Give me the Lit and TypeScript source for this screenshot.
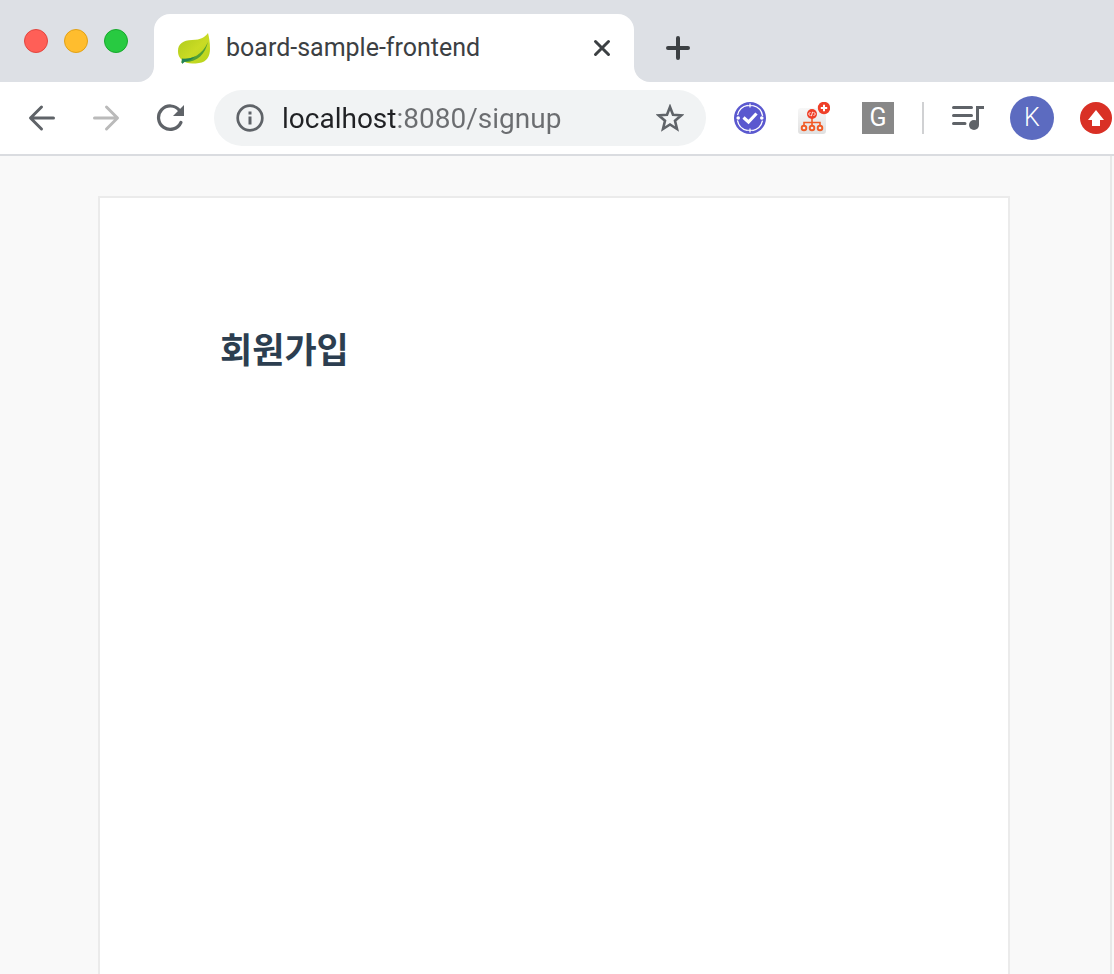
import { LitElement, html, css, svg } from "lit";
import { customElement } from "lit/decorators.js";

const backIcon = html`<svg width="28" height="28" viewBox="0 0 28 28" aria-hidden="true" fill="none" stroke="#5f6368" stroke-width="3" stroke-linecap="round" stroke-linejoin="round"><path d="M25.500 14H3M13.500 3L2.500 14l11 11"/></svg>`;
const forwardIcon = html`<svg width="28" height="28" viewBox="0 0 28 28" aria-hidden="true" fill="none" stroke="#bababa" stroke-width="3" stroke-linecap="round" stroke-linejoin="round"><path d="M2.500 14H25M14.500 3l11 11-11 11"/></svg>`;
const reloadIcon = html`<svg width="28" height="28" viewBox="0 0 28 28" aria-hidden="true"><path d="M23.500 6.500A11.700 11.700 0 1 0 24.900 18.500" fill="none" stroke="#5f6368" stroke-width="3.200" stroke-linecap="round"/><path d="M28 1v11H17z" fill="#5f6368"/></svg>`;
const infoIcon = html`<svg width="28" height="28" viewBox="0 0 28 28" aria-hidden="true"><circle cx="14" cy="14" r="12.300" fill="none" stroke="#5f6368" stroke-width="2.700"/><path d="M12.500 7.500h3v3h-3zM12.500 12.500h3v8h-3z" fill="#5f6368"/></svg>`;
const starIcon = html`<svg width="28" height="28" viewBox="0 0 28 28" aria-hidden="true"><path d="M14 3l3 7.800 8.300.5-6.300 5.400 2 8.300-7-4.500-7 4.500 2-8.300-6.300-5.400 8.300-.5z" fill="none" stroke="#5f6368" stroke-width="2.600"/></svg>`;

const leaf = html`<svg width="32" height="32" viewBox="0 0 32 32" aria-hidden="true">
  <defs><linearGradient id="leaf" x1="0" y1="0" x2="1" y2="1"><stop offset="0" stop-color="#abc91b"/><stop offset=".55" stop-color="#cadb24"/><stop offset="1" stop-color="#b5d31c"/></linearGradient></defs>
  <path d="M30 1C27 5 23 8 14 8 5 8 0 12 0 19c0 5 2 7 4 9 4 4 10 4 17 3 8-1 11-7 11-14 0-7-1-12-2-16z" fill="url(#leaf)"/>
  <path d="M4 27c11 0 20-4 26-17-3 12-10 20-23 20-2 0-4 1-4 1z" fill="#529f35"/>
  <path d="M4 26.500c5 1 10-.5 13-2-3 3-6 4.500-10 5L4 32z" fill="#238356"/>
</svg>`;

const checkIcon = html`<svg width="32" height="32" viewBox="0 0 32 32" aria-hidden="true"><circle cx="16" cy="16" r="16" fill="#5a58cf"/><circle cx="16" cy="16" r="12.800" fill="none" stroke="#fff" stroke-width="1.300" stroke-dasharray="14.600 5.500" stroke-dashoffset="-2.800"/><path d="M16 1.500v4M16 26.500v4" stroke="#fff" stroke-width="1.200"/><path d="M13 3.700h6M13 28.300h6" stroke="#fff" stroke-width="1"/><circle cx="4.200" cy="16" r="1.800" fill="#fff"/><circle cx="27.800" cy="16" r="1.800" fill="#fff"/><path d="M9.500 15.500l5 4.500L22.500 11.500" fill="none" stroke="#fff" stroke-width="3.200"/></svg>`;

const node = (cx: number) => svg`<circle cx=${cx} cy="26" r="2.300" fill="#eee" stroke="#f15a24" stroke-width="1.900"/>`;
const treeIcon = html`<svg width="32" height="32" viewBox="0 0 32 32" aria-hidden="true">
  <defs><linearGradient id="tile" x1="0" y1="0" x2="0" y2="1"><stop offset="0" stop-color="#f7f7f7"/><stop offset="1" stop-color="#e0e0e0"/></linearGradient></defs>
  <rect y="6" width="28" height="26" rx="3" fill="url(#tile)"/>
  <path d="M14 16v8M6 24v-3.500h16V24" fill="none" stroke="#f15a24" stroke-width="1.600"/>
  ${node(6)}${node(14)}${node(22)}
  <circle cx="14" cy="12" r="5" fill="#ef3f28"/>
  <path d="M12.500 10l-2 2 2 2M15.500 10l2 2-2 2M14.600 9.800l-1.200 4.400" fill="none" stroke="#fff" stroke-width=".9"/>
  <circle cx="26" cy="6" r="6.200" fill="#ef4029"/><path d="M26 2.800v6.400M22.800 6h6.400" stroke="#fff" stroke-width="2"/>
</svg>`;

const musicIcon = html`<svg width="32" height="28" viewBox="0 0 32 28" aria-hidden="true"><path d="M1.500 3.500h18M1.500 11.500h18M1.500 19.500h11.500" stroke="#5f6368" stroke-width="3" stroke-linecap="round"/><circle cx="22" cy="21" r="5" fill="#5f6368"/><path d="M24 21V2h8v3h-5v16z" fill="#5f6368"/></svg>`;
const updateIcon = html`<svg width="32" height="32" viewBox="0 0 32 32" aria-hidden="true"><circle cx="16" cy="16" r="16" fill="#d93025"/><path d="M16 8l8 10h-4v6h-8v-6H8z" fill="#fff"/></svg>`;

@customElement("app-root")
export class AppRoot extends LitElement {
  static styles = css`
    :host {
      display: flex;
      flex-direction: column;
      min-height: 100vh;
      overflow: hidden;
      background: #fff;
      font-family: Roboto, "Noto Sans CJK KR", sans-serif;
    }
    * { box-sizing: border-box; }
    svg { display: block; }
    button {
      display: flex;
      align-items: center;
      justify-content: center;
      padding: 0;
      border: 0;
      background: none;
      font: inherit;
      cursor: pointer;
    }
    .strip { display: flex; height: 82px; }
    .lights {
      display: flex;
      gap: 16px;
      width: 154px;
      padding: 29px 24px;
      background: #dde0e5;
      border-bottom-right-radius: 16px;
    }
    .light { width: 24px; height: 24px; border-radius: 50%; }
    .close { background: #ff5f57; border: 1px solid #e2463f; }
    .minimize { background: #ffbd2e; border: 1px solid #e1a116; }
    .maximize { background: #28ca41; border: 1px solid #17a92c; }
    .slot { width: 480px; padding-top: 14px; background: #dde0e5; }
    .tab {
      display: flex;
      align-items: center;
      gap: 16px;
      height: 68px;
      padding: 0 20px 0 24px;
      background: #fff;
      border-radius: 16px 16px 0 0;
    }
    .title { flex: 1; font-size: 25px; line-height: 32px; color: #3c4043; }
    .tab-close { width: 24px; height: 24px; }
    .rest {
      flex: 1;
      padding: 32px 28px;
      background: #dde0e5;
      border-bottom-left-radius: 16px;
    }
    .add { width: 32px; height: 32px; }
    .toolbar {
      display: flex;
      align-items: center;
      height: 74px;
      padding: 0 2px 0 10px;
      border-bottom: 2px solid #dadce0;
    }
    .tool { flex: none; width: 64px; height: 64px; }
    .omnibox {
      display: flex;
      flex: 1;
      align-items: center;
      gap: 18px;
      min-width: 0;
      height: 56px;
      margin: 0 12px;
      padding: 0 22px;
      border-radius: 28px;
      background: #f1f3f4;
    }
    .url {
      flex: 1;
      min-width: 0;
      height: 40px;
      padding: 0;
      border: 0;
      outline: 0;
      font-family: inherit;
      font-size: 28px;
      color: transparent;
      caret-color: #202124;
      background: linear-gradient(90deg, #202124 114px, #6b6d70 114px);
      background-clip: text;
      -webkit-background-clip: text;
    }
    .divider { flex: none; width: 2px; height: 32px; margin: 0 12px; background: #d0d1d3; }
    .g {
      width: 32px;
      height: 32px;
      background: #888;
      color: #fff;
      font-size: 25px;
      line-height: 32px;
    }
    .avatar {
      width: 44px;
      height: 44px;
      border-radius: 50%;
      background: #5c6bc0;
      color: #fff;
      font-size: 25px;
      font-weight: 300;
      line-height: 44px;
    }
    .update { flex: none; width: 32px; height: 64px; margin-left: 16px; }
    .page {
      display: flex;
      flex: 1;
      margin-right: 2px;
      padding: 40px 100px 0 98px;
      border-right: 2px solid #e8e8e8;
      background: #f9f9f9;
    }
    .viewport { display: flex; flex: 1; background: #f9f9f9; }
    .card {
      flex: 1;
      padding: 120px;
      border: 2px solid #ebebeb;
      border-bottom: 0;
      background: #fff;
    }
    .heading {
      margin: 0;
      font-family: "Noto Sans CJK KR", sans-serif;
      font-size: 35px;
      font-weight: 700;
      line-height: 60px;
      color: #2c3e50;
    }
  `;

  render() {
    return html`
      <header>
        <div class="strip">
          <div class="lights">
            <button class="light close" aria-label="Close window"></button>
            <button class="light minimize" aria-label="Minimize"></button>
            <button class="light maximize" aria-label="Maximize"></button>
          </div>
          <div class="slot">
            <div class="tab">
              ${leaf}
              <span class="title">board-sample-frontend</span>
              <button class="tab-close" aria-label="Close tab">
                <svg width="24" height="24" viewBox="0 0 24 24" aria-hidden="true"><path d="M5.500 5.500l13 13M18.500 5.500l-13 13" stroke="#3c4043" stroke-width="3" stroke-linecap="round"/></svg>
              </button>
            </div>
          </div>
          <div class="rest">
            <button class="add" aria-label="New tab">
              <svg width="24" height="24" viewBox="0 0 24 24" aria-hidden="true"><path d="M12 2v20M2 12h20" stroke="#3c4043" stroke-width="4" stroke-linecap="round"/></svg>
            </button>
          </div>
        </div>
        <nav class="toolbar">
          <button class="tool" aria-label="Back">${backIcon}</button>
          <button class="tool" aria-label="Forward">${forwardIcon}</button>
          <button class="tool" aria-label="Reload">${reloadIcon}</button>
          <div class="omnibox">
            <button aria-label="Site information">${infoIcon}</button>
            <input class="url" type="text" aria-label="Address" value="localhost:8080/signup" spellcheck="false" />
            <button aria-label="Bookmark">${starIcon}</button>
          </div>
          <button class="tool" aria-label="Tasks extension">${checkIcon}</button>
          <button class="tool" aria-label="Code tree extension">${treeIcon}</button>
          <button class="tool"><span class="g">G</span></button>
          <span class="divider"></span>
          <button class="tool" aria-label="Media controls">${musicIcon}</button>
          <button class="tool"><span class="avatar">K</span></button>
          <button class="update" aria-label="Update">${updateIcon}</button>
        </nav>
      </header>
      <div class="viewport">
        <main class="page">
          <section class="card">
            <h1 class="heading">회원가입</h1>
          </section>
        </main>
      </div>
    `;
  }
}
